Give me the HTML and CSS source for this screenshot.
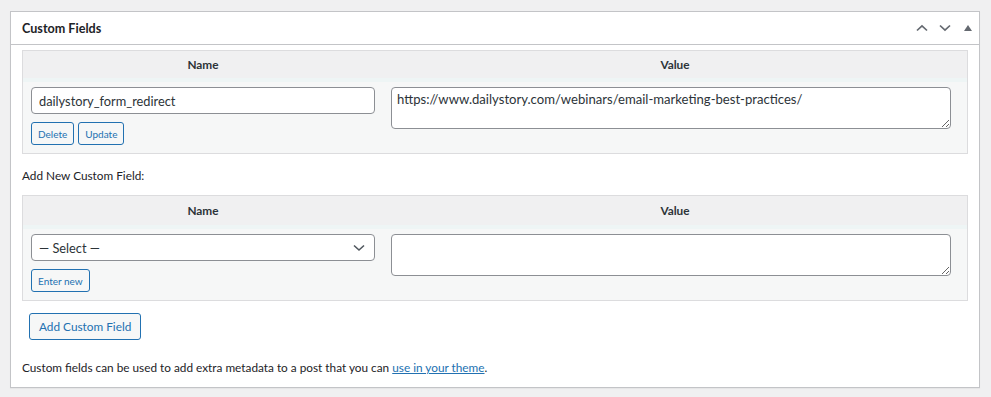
FILE: index.html
```html
<!DOCTYPE html>
<html lang="en">
<head>
  <meta charset="UTF-8">
  <meta name="viewport" content="width=device-width, initial-scale=1.0">
  <title>Custom Fields</title>
  <link rel="stylesheet" href="styles.css">
</head>
<body>
  <div class="postbox">
    <div class="postbox-header">
      <h2>Custom Fields</h2>
      <div class="handle-actions">
        <span class="handle-btn">
          <svg width="12" height="8" viewBox="0 0 12 8"><polyline points="1,6.5 6,1.8 11,6.5" fill="none" stroke="#646970" stroke-width="1.7"/></svg>
        </span>
        <span class="handle-btn">
          <svg width="12" height="8" viewBox="0 0 12 8"><polyline points="1,1.5 6,6.2 11,1.5" fill="none" stroke="#646970" stroke-width="1.7"/></svg>
        </span>
        <span class="handle-btn">
          <svg width="8" height="6" viewBox="0 0 8 6"><polygon points="0,6 4,0 8,6" fill="#646970"/></svg>
        </span>
      </div>
    </div>

    <div class="inside">
      <table class="meta-table">
        <colgroup><col class="col-name"><col></colgroup>
        <thead>
          <tr><th>Name</th><th>Value</th></tr>
        </thead>
        <tbody>
          <tr>
            <td>
              <input type="text" class="field" value="dailystory_form_redirect">
              <div class="row-actions">
                <button class="button small">Delete</button>
                <button class="button small">Update</button>
              </div>
            </td>
            <td><textarea class="value">https://www.dailystory.com/webinars/email-marketing-best-practices/</textarea></td>
          </tr>
        </tbody>
      </table>

      <p class="new-label">Add New Custom Field:</p>

      <table class="meta-table new-meta">
        <colgroup><col class="col-name"><col></colgroup>
        <thead>
          <tr><th>Name</th><th>Value</th></tr>
        </thead>
        <tbody>
          <tr>
            <td>
              <div class="select-wrap">
                <select class="field">
                  <option>— Select —</option>
                </select>
                <svg class="select-arrow" width="12" height="8" viewBox="0 0 12 8"><polyline points="1,1.5 6,6 11,1.5" fill="none" stroke="#50575e" stroke-width="1.6"/></svg>
              </div>
              <div class="row-actions">
                <button class="button small">Enter new</button>
              </div>
            </td>
            <td><textarea class="value"></textarea></td>
          </tr>
        </tbody>
      </table>

      <div class="submit">
        <button class="button">Add Custom Field</button>
      </div>

      <p class="note">Custom fields can be used to add extra metadata to a post that you can <a href="#">use in your theme</a>.</p>
    </div>
  </div>
</body>
</html>
```

FILE: styles.css
```css
body {
  margin: 0;
  padding: 11px 11px 10px 10px;
  background-color: #f0f0f1;
  font-family: Lato, "Liberation Sans", sans-serif;
  font-size: 11.8px;
  color: #1d2327;
}
.postbox {
  width: 968px;
  background-color: #fff;
  border: 1px solid #c3c4c7;
  box-shadow: 0 1px 1px rgba(0,0,0,0.04);
}
.postbox-header {
  height: 32px;
  display: flex;
  align-items: center;
  justify-content: space-between;
  border-bottom: 1px solid #c3c4c7;
  padding-left: 11px;
}
.postbox-header h2 {
  margin: 0;
  font-size: 12.6px;
  font-weight: 700;
  color: #1d2327;
}
.handle-actions {
  display: flex;
  align-items: center;
  height: 100%;
}
.handle-btn {
  width: 23px;
  height: 100%;
  display: flex;
  align-items: center;
  justify-content: center;
}
.handle-btn svg {
  display: block;
}
.inside {
  padding: 0 11px 11px;
}
.meta-table {
  width: 100%;
  margin-top: 5px;
  border: 1px solid #dcdcde;
  border-spacing: 0;
  table-layout: fixed;
  background-color: #f6f7f7;
}
.col-name {
  width: 360px;
}
.meta-table th {
  height: 27px;
  padding: 0 8px;
  font-size: 11.8px;
  font-weight: 700;
  color: #2c3338;
  text-align: center;
  background-color: #f0f0f1;
}
.new-meta th {
  height: 29px;
}
.meta-table td {
  vertical-align: top;
  padding: 5px 8px 8px;
  border-top: 4px solid #eef5f5;
  background-color: #f6f7f7;
}
.field {
  display: block;
  width: 100%;
  height: 27px;
  box-sizing: border-box;
  margin: 0;
  padding: 0 7px;
  border: 1px solid #8c8f94;
  border-radius: 4px;
  background-color: #fff;
  font-family: inherit;
  font-size: 12.8px;
  color: #2c3338;
}
.select-wrap {
  position: relative;
}
.select-wrap select {
  appearance: none;
  -webkit-appearance: none;
}
.select-arrow {
  position: absolute;
  right: 10px;
  top: 10px;
  pointer-events: none;
}
.value {
  display: block;
  width: 560px;
  height: 42px;
  box-sizing: border-box;
  margin: 0;
  padding: 3px 5px;
  border: 1px solid #8c8f94;
  border-radius: 4px;
  background-color: #fff;
  font-family: inherit;
  font-size: 13.1px;
  line-height: 1.3;
  color: #2c3338;
}
.row-actions {
  display: flex;
  gap: 4px;
  margin-top: 8px;
}
.button {
  height: 27px;
  padding: 0 9px;
  border: 1px solid #2271b1;
  border-radius: 3px;
  background-color: #f6f7f7;
  color: #2271b1;
  font-family: inherit;
  font-size: 11.8px;
  cursor: pointer;
}
.button.small {
  height: 23px;
  padding: 0 6px;
  font-size: 10px;
}
.new-label {
  margin: 13px 0 11px;
  line-height: 17px;
}
.new-label + .meta-table {
  margin-top: 0;
}
.submit {
  margin-top: 12px;
  padding-left: 7px;
}
.note {
  margin: 19px 0 0;
  line-height: 17px;
}
.note a {
  color: #2271b1;
}
```
